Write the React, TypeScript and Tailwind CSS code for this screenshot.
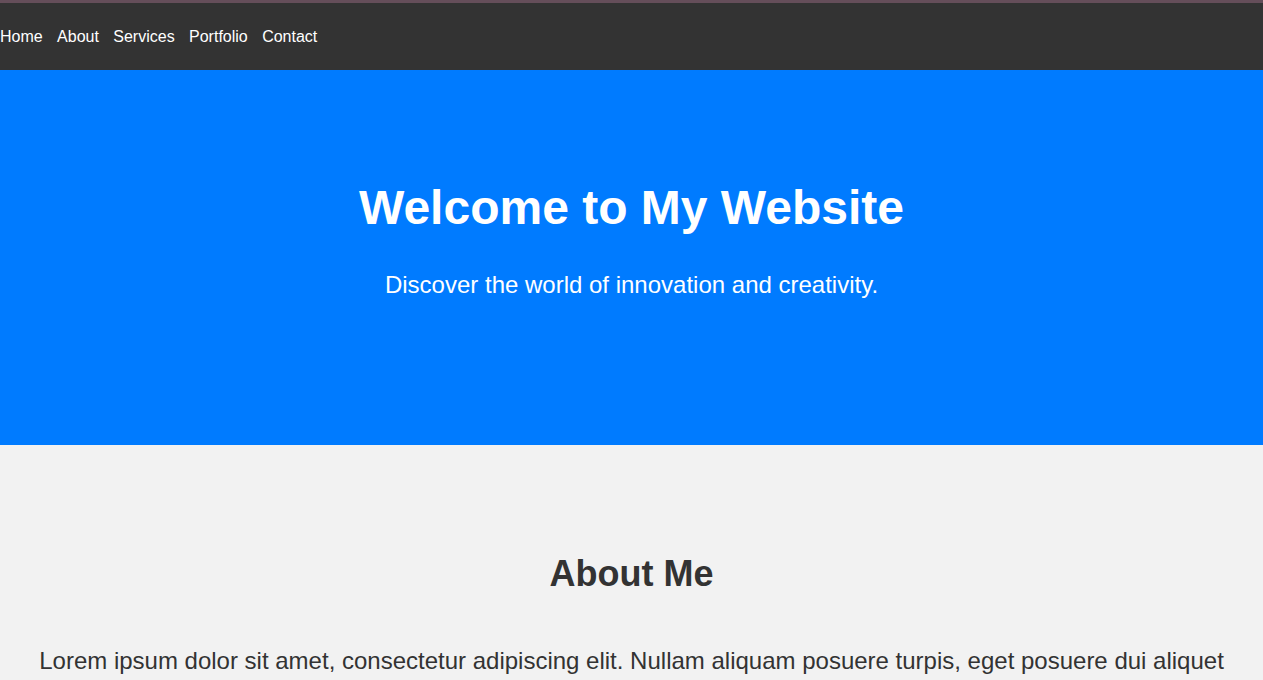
export default function App() {
  const links = ["Home", "About", "Services", "Portfolio", "Contact"];
  return (
    <div className="min-h-screen bg-[#f2f2f2] font-['Liberation_Sans',Arial,sans-serif]">
      <div className="h-[3px] bg-[#654e5a]" />
      <nav className="h-[67px] bg-[#333333] pt-[25px]">
        <ul className="flex gap-[14.4px] text-[16px] leading-[18px] text-white">
          {links.map((l) => (
            <li key={l}>
              <a href="#">{l}</a>
            </li>
          ))}
        </ul>
      </nav>
      <section className="h-[375px] bg-[#007bff] pt-[110px] text-center text-white">
        <h1 className="text-[48px] font-bold leading-[55px]">Welcome to My Website</h1>
        <p className="mt-[36px] text-[24px] leading-[28px]">
          Discover the world of innovation and creativity.
        </p>
      </section>
      <section className="bg-[#f2f2f2] px-[20px] pt-[108px] pb-[60px] text-center text-[#333333]">
        <h2 className="text-[36px] font-bold leading-[41px]">About Me</h2>
        <p className="mt-[53px] text-[24px] leading-[28px]">
          Lorem ipsum dolor sit amet, consectetur adipiscing elit. Nullam aliquam posuere turpis, eget posuere dui aliquet vestibulum. Sed euismod, nisl eget ultricies aliquam, nunc nisl aliquet nunc, quis aliquam nisl nunc eu nisl.
        </p>
      </section>
    </div>
  );
}
